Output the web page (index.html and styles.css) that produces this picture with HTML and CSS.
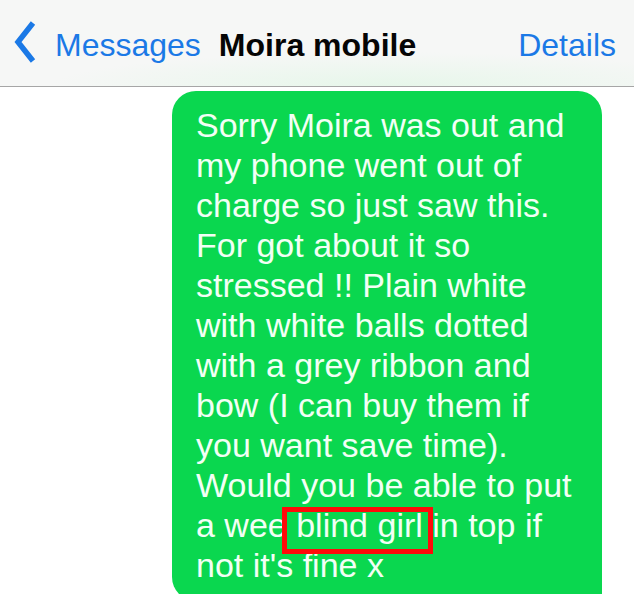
FILE: index.html
```html
<!DOCTYPE html>
<html lang="en">
<head>
  <meta charset="UTF-8">
  <meta name="viewport" content="width=device-width, initial-scale=1">
  <title>Moira mobile</title>
  <link rel="stylesheet" href="styles.css">
</head>
<body>
  <!-- Navigation bar -->
  <header class="navbar">
    <a class="back" href="#">
      <svg class="chevron" width="22" height="44" viewBox="0 0 22 44">
        <polyline points="19,3 4,22 19,41" fill="none" stroke="currentColor" stroke-width="5.5" stroke-linejoin="miter"/>
      </svg>
      <span>Messages</span>
    </a>
    <h1 class="title">Moira mobile</h1>
    <a class="details" href="#">Details</a>
  </header>

  <!-- Conversation -->
  <main class="thread">
    <div class="bubble">
      Sorry Moira was out and<br>
      my phone went out of<br>
      charge so just saw this.<br>
      For got about it so<br>
      stressed !! Plain white<br>
      with white balls dotted<br>
      with a grey ribbon and<br>
      bow (I can buy them if<br>
      you want save time).<br>
      Would you be able to put<br>
      a wee <span class="marked">blind girl</span> in top if<br>
      not it's fine x
    </div>
  </main>
</body>
</html>
```

FILE: styles.css
```css
/* Reset & Base Styles */
* {
  box-sizing: border-box;
  margin: 0;
  padding: 0;
}
body {
  font-family: 'Liberation Sans', Arial, sans-serif;
  background: #fff;
  color: #000;
  height: 594px;
  overflow: hidden;
}
a {
  text-decoration: none;
}
/* Nav bar */
.navbar {
  height: 87px;
  display: flex;
  align-items: center;
  padding: 4px 18px 0 14px;
  background: radial-gradient(ellipse 340px 34px at 390px 100%, rgba(218, 246, 224, 0.55), rgba(246, 247, 246, 0) 100%), #f6f7f6;
  border-bottom: 1px solid #a6a6a6;
  font-size: 32px;
}
.back {
  display: flex;
  align-items: center;
  color: #1b79e6;
}
.chevron {
  margin-right: 19px;
  margin-top: -6px;
}
.title {
  font-size: 32px;
  font-weight: bold;
  margin-left: 18px;
  color: #050505;
}
.details {
  margin-left: auto;
  color: #1b79e6;
}
/* Message thread */
.thread {
  padding-top: 4px;
}
.bubble {
  margin-left: 172px;
  width: 430px;
  padding: 14px 10px 16px 24px;
  background: #0ad74f;
  color: #f2fff5;
  font-size: 34px;
  line-height: 40px;
  border-radius: 24px 24px 0 24px;
  white-space: nowrap;
}
.marked {
  position: relative;
}
.marked::after {
  content: "";
  position: absolute;
  top: 1px;
  bottom: -10px;
  left: -14px;
  right: -10px;
  border: 5px solid #ff0a0a;
}
```
